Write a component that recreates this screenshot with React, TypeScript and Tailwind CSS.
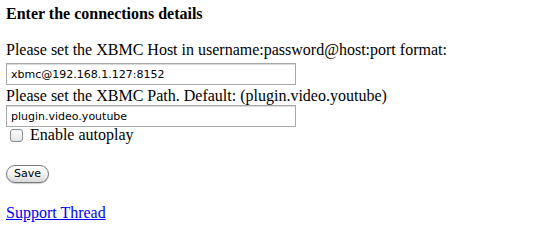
import { useState } from "react";

const serif = "font-['Liberation_Serif','Times_New_Roman',serif]";
const sans = "font-['DejaVu_Sans','Lucida_Grande',sans-serif]";

const App = () => {
	const [host, setHost] = useState("xbmc@192.168.1.127:8152");
	const [path, setPath] = useState("plugin.video.youtube");
	const [autoplay, setAutoplay] = useState(false);

	return (
		<div className={`${serif} bg-white text-black w-[540px] h-[237px] pl-[6px] pt-[5px]`}>
			<h3 className="text-[16px] leading-[18px] font-bold">
				Enter the connections details
			</h3>
			<form className="mt-[18px] flex flex-col" onSubmit={(e) => e.preventDefault()}>
				<label className="text-[16px] leading-[18px] h-[22px]">
					Please set the XBMC Host in username:password@host:port format:
				</label>
				<input
					className={`${sans} w-[290px] h-[22px] border border-[#a9a9a9] shadow-[inset_0_1px_1px_rgba(0,0,0,0.15)] px-[4px] text-[11px] text-black outline-none`}
					value={host}
					onChange={(e) => setHost(e.target.value)}
				/>
				<label className="text-[16px] leading-[18px] h-[20px] pt-[2px]">
					Please set the XBMC Path. Default: (plugin.video.youtube)
				</label>
				<input
					className={`${sans} w-[290px] h-[22px] border border-[#a9a9a9] shadow-[inset_0_1px_1px_rgba(0,0,0,0.15)] px-[4px] text-[11px] text-black outline-none`}
					value={path}
					onChange={(e) => setPath(e.target.value)}
				/>
				<label className="flex items-center gap-[7px] text-[16px] leading-[18px] h-[16px] pl-[4px]">
					<span
						className={`w-[13px] h-[13px] rounded-[3px] border ${
							autoplay ? "bg-[#3b82f6] border-[#2563eb]" : "border-[#8c8c8c] bg-gradient-to-b from-white to-[#e4e4e4]"
						}`}
						onClick={() => setAutoplay(!autoplay)}
					/>
					Enable autoplay
				</label>
				<div className="mt-[17px]">
					<button
						type="submit"
						className={`${sans} w-[43px] h-[18px] rounded-full border border-[#7a7a7a] bg-gradient-to-b from-white via-[#f3f3f3] to-[#d9d9d9] text-[11px] leading-[16px] text-black shadow-[0_1px_1px_rgba(0,0,0,0.2)]`}
					>
						Save
					</button>
				</div>
				<div className="mt-[17px]">
					<a href="#" className="text-[16px] leading-[18px] text-[#0000ee] underline">
						Support Thread
					</a>
				</div>
			</form>
		</div>
	);
};

export default App;
